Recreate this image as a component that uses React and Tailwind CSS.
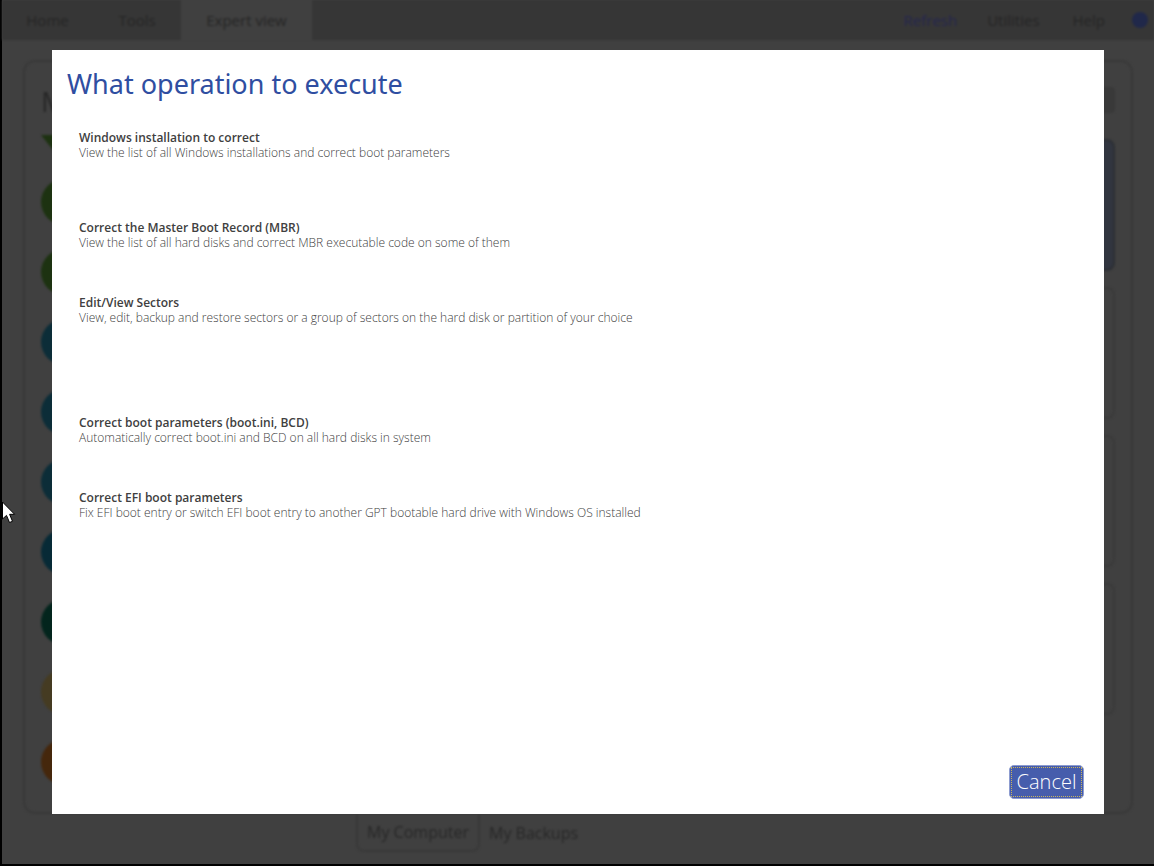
import React from "react";

const operations = [
  {
    title: "Windows installation to correct",
    text: "View the list of all Windows installations and correct boot parameters",
    gap: "mb-[60px]",
  },
  {
    title: "Correct the Master Boot Record (MBR)",
    text: "View the list of all hard disks and correct MBR executable code on some of them",
    gap: "mb-[45px]",
  },
  {
    title: "Edit/View Sectors",
    text: "View, edit, backup and restore sectors or a group of sectors on the hard disk or partition of your choice",
    gap: "mb-[90px]",
  },
  {
    title: "Correct boot parameters (boot.ini, BCD)",
    text: "Automatically correct boot.ini and BCD on all hard disks in system",
    gap: "mb-[45px]",
  },
  {
    title: "Correct EFI boot parameters",
    text: "Fix EFI boot entry or switch EFI boot entry to another GPT bootable hard drive with Windows OS installed",
    gap: "mb-0",
  },
];

const tools = [
  "bg-[#1d3211]",
  "bg-[#1d3211]",
  "bg-[#0c2d38]",
  "bg-[#0c2d38]",
  "bg-[#0c2d38]",
  "bg-[#072a36]",
  "bg-[#03251d]",
  "bg-[#453b22]",
  "bg-[#45270c]",
];

function TopBar() {
  return (
    <header className="flex h-10 items-stretch justify-between bg-[#363636] text-[15px] text-[#252525]">
      <nav className="flex">
        <a href="#home" className="flex w-[91px] items-center justify-center">Home</a>
        <a href="#tools" className="flex w-[88px] items-center justify-center">Tools</a>
        <a href="#expert" className="flex w-[131px] items-center justify-center bg-[#404040]">Expert view</a>
      </nav>
      <div className="flex items-center pr-1.5">
        <button type="button" className="mr-[30px] font-medium text-[#25264f]">Refresh</button>
        <button type="button" className="mr-[33px]">Utilities</button>
        <button type="button" className="mr-[27px]">Help</button>
        <span className="size-4 rounded-full bg-[#20284a]" />
      </div>
    </header>
  );
}

function Background() {
  return (
    <div inert className="flex min-h-screen flex-col border-b-2 border-l-2 border-black bg-[#404040]">
      <div className="flex grow flex-col blur-[1px]">
        <TopBar />
        <main className="mx-[21px] mt-5 flex h-[754px] justify-between rounded-xl border-2 border-[#393939] pr-4 pl-4">
          <div className="flex flex-col">
            <span className="mt-[19px] h-10 w-8 overflow-hidden text-[28px] leading-10 text-[#272727]">M</span>
            <svg className="mt-[14px] mb-5 h-6 w-8" viewBox="0 0 32 24" aria-hidden="true">
              <path d="M0 0H32L16 20Z" fill="#1d3211" />
            </svg>
            <ul className="flex flex-col gap-6">
              {tools.map((color, i) => (
                <li key={i} className={`size-[46px] rounded-full ${color}`} />
              ))}
            </ul>
          </div>
          <div className="flex w-[100px] flex-col">
            <span className="mt-[25px] mb-[26px] h-[26px] w-full rounded bg-[#393939]" />
            <div className="flex flex-col gap-4">
              <div className="h-[132px] rounded-lg border-2 border-[#2d3035] bg-[#31353f]" />
              <div className="h-[132px] rounded-lg border-2 border-[#3a3a3a]" />
              <div className="h-[132px] rounded-lg border-2 border-[#3a3a3a]" />
              <div className="h-[132px] rounded-lg border-2 border-[#3a3a3a]" />
            </div>
          </div>
        </main>
        <footer className="ml-[354px] flex h-[38px] text-base text-[#272727]">
          <button type="button" className="w-[124px] rounded-b-lg border-2 border-t-0 border-[#393939]">My Computer</button>
          <button type="button" className="ml-[9px]">My Backups</button>
        </footer>
      </div>
    </div>
  );
}

export default function App() {
  return (
    <div className="relative min-h-screen overflow-hidden font-['Open_Sans','Noto_Sans',sans-serif]">
      <Background />
      <div className="absolute inset-0 flex px-[50px] pt-[50px] pb-[52px] pl-[52px]">
        <section
          role="dialog"
          aria-modal="true"
          aria-labelledby="dialog-title"
          className="flex grow flex-col justify-between bg-white px-[15px] pt-[14px] pb-[15px]"
        >
          <div>
            <h1 id="dialog-title" className="font-['Noto_Sans','Open_Sans',sans-serif] text-[27px] leading-10 text-[#2f4ea1]">What operation to execute</h1>
            <ul className="mt-[26px] ml-3">
              {operations.map((op) => (
                <li key={op.title} className={op.gap}>
                  <button type="button" className="block text-left text-xs leading-[15px] text-[#404040]">
                    <span className="block font-semibold">{op.title}</span>
                    <span className="block font-light">{op.text}</span>
                  </button>
                </li>
              ))}
            </ul>
          </div>
          <button
            type="button"
            className="mr-[5px] h-[34px] w-[75px] self-end rounded-[5px] border border-[#8d9cd0] bg-[#465dac] p-px text-xl text-white"
          >
            <span className="flex h-full items-center justify-center border border-dotted border-[#c9b45e] font-light">Cancel</span>
          </button>
        </section>
      </div>
      <svg className="absolute top-[501px] left-[2px] h-6 w-4" viewBox="0 0 16 24" aria-hidden="true">
        <path d="M0.5 1V18L4.5 14.4L7.5 21.5L10.5 20.3L7.6 13.3H12.6Z" fill="#fff" stroke="#000" strokeWidth="1" />
      </svg>
    </div>
  );
}
